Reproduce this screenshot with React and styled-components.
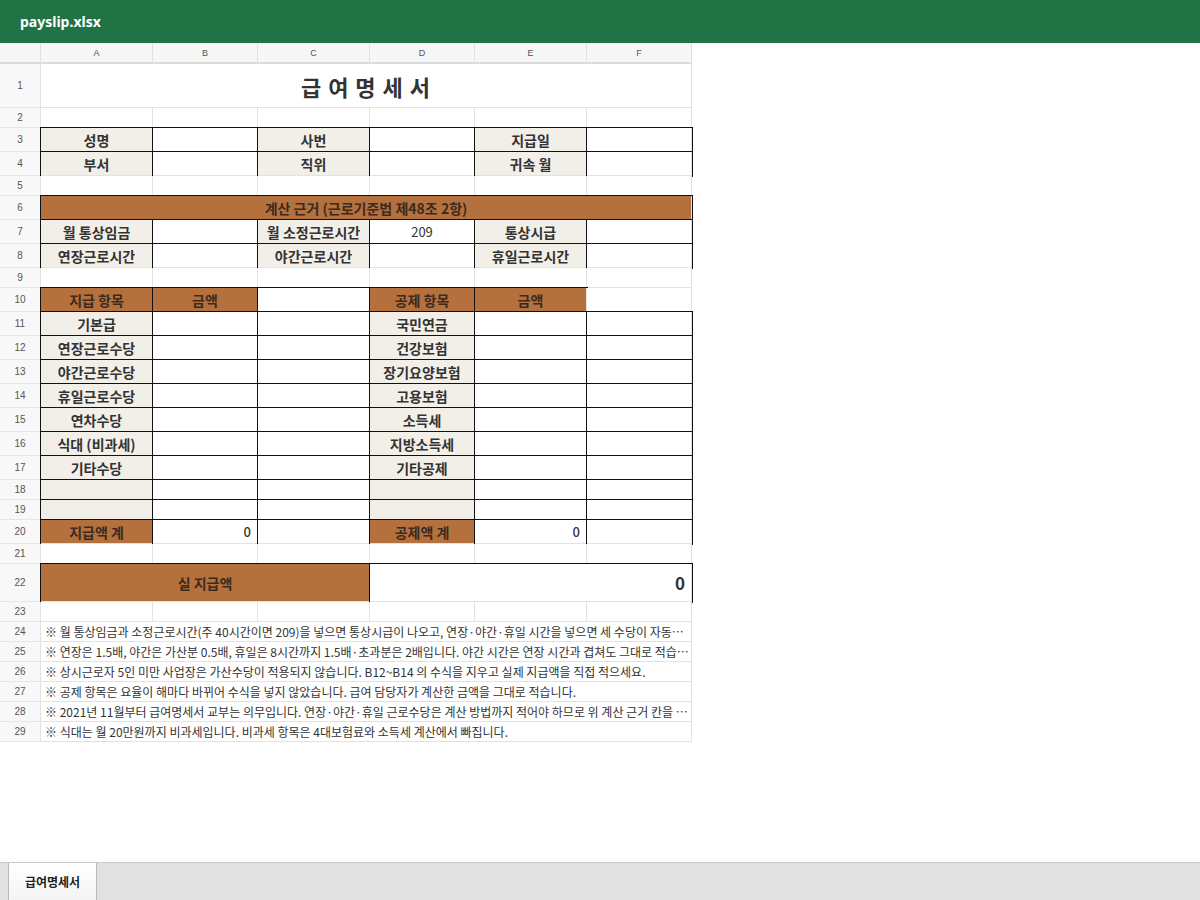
import React from 'react';
import styled, { createGlobalStyle, css } from 'styled-components';

const GlobalStyle = createGlobalStyle`
  html, body {
    margin: 0;
    padding: 0;
    background: #ffffff;
  }
  body {
    font-family: "Noto Sans CJK KR", "Noto Sans", sans-serif;
    color: #333333;
  }
`;

const COLS = '41px 112px 105px 112px 105px 112px 105px';

const Page = styled.div`
  display: flex;
  flex-direction: column;
  height: 100vh;
  overflow: hidden;
`;

const TitleBar = styled.header`
  height: 43px;
  flex: none;
  background: #217346;
  color: #ffffff;
  display: flex;
  align-items: center;
  padding-left: 20px;
  font-family: "Noto Sans", "Open Sans", sans-serif;
  font-weight: 700;
  font-size: 14px;
`;

const SheetArea = styled.main`
  flex: 1;
  overflow: hidden;
  background: #ffffff;
`;

const Sheet = styled.div`
  width: 692px;
  display: flex;
  flex-direction: column;
`;

const SheetRow = styled.div`
  display: grid;
  grid-template-columns: ${COLS};
  height: ${(p) => p.$h}px;
`;

const ColHeader = styled.div`
  display: flex;
  align-items: center;
  justify-content: center;
  box-sizing: border-box;
  background: #f6f6f6;
  border-right: 1px solid #e2e2e2;
  border-bottom: 2px solid #dcdcdc;
  font-family: "Liberation Sans", sans-serif;
  font-size: 9px;
  color: #555555;
`;

const RowHeader = styled.div`
  display: flex;
  align-items: center;
  justify-content: center;
  box-sizing: border-box;
  background: #f8f8f8;
  border-right: 1px solid #e2e2e2;
  border-bottom: 1px solid #e6e6e6;
  font-family: "Liberation Sans", sans-serif;
  font-size: 10px;
  color: #555555;
`;

const fills = {
  white: '#ffffff',
  label: '#f2efe9',
  brown: '#b5713d',
};

const Cell = styled.div`
  grid-column: span ${(p) => p.$span || 1};
  display: flex;
  align-items: center;
  justify-content: ${(p) => (p.$align === 'right' ? 'flex-end' : p.$align === 'left' ? 'flex-start' : 'center')};
  box-sizing: border-box;
  min-width: 0;
  padding: ${(p) => (p.$align === 'right' ? '0 6px 0 4px' : p.$align === 'left' ? '0 2px 0 4px' : '0 4px')};
  background: ${(p) => fills[p.$fill || 'white']};
  border-right: 1px solid #e2e2e2;
  border-bottom: 1px solid #e2e2e2;
  font-size: ${(p) => p.$size || 14}px;
  font-weight: ${(p) => p.$weight || 700};
  color: ${(p) => (p.$fill === 'brown' ? '#3b2a1f' : '#333333')};
  white-space: nowrap;
  ${(p) =>
    p.$boxed &&
    css`
      outline: 1px solid #111111;
    `}
`;

const CellText = styled.span`
  overflow: hidden;
  text-overflow: ellipsis;
  white-space: nowrap;
  letter-spacing: ${(p) => p.$spacing || 0}px;
`;

const TabBar = styled.footer`
  height: 37px;
  flex: none;
  background: #e1e1e1;
  border-top: 1px solid #c8c8c8;
  display: flex;
  padding-left: 8px;
`;

const SheetTab = styled.div`
  width: 87px;
  display: flex;
  align-items: center;
  justify-content: center;
  background: linear-gradient(#ffffff, #f4f4f4);
  border-left: 1px solid #b9b9b9;
  border-right: 1px solid #b9b9b9;
  font-size: 12px;
  font-weight: 700;
  color: #222222;
`;

const L = (text) => ({ text, fill: 'label', boxed: true });
const B = (text) => ({ text, fill: 'brown', boxed: true });
const W = (text = '', extra = {}) => ({ text, boxed: true, ...extra });
const E = () => ({ text: '' });
const blank = () => [E(), E(), E(), E(), E(), E()];
const note = (text) => [{ text, span: 6, align: 'left', weight: 400, size: 12 }];

const rows = [
  { h: 44, cells: [{ text: '급 여 명 세 서', span: 6, size: 22, spacing: 1 }] },
  { h: 20, cells: blank() },
  { h: 24, cells: [L('성명'), W(), L('사번'), W(), L('지급일'), W()] },
  { h: 24, cells: [L('부서'), W(), L('직위'), W(), L('귀속 월'), W()] },
  { h: 20, cells: blank() },
  { h: 24, cells: [{ ...B('계산 근거 (근로기준법 제48조 2항)'), span: 6 }] },
  { h: 24, cells: [L('월 통상임금'), W(), L('월 소정근로시간'), W('209', { weight: 400, size: 13 }), L('통상시급'), W()] },
  { h: 24, cells: [L('연장근로시간'), W(), L('야간근로시간'), W(), L('휴일근로시간'), W()] },
  { h: 20, cells: blank() },
  { h: 24, cells: [B('지급 항목'), B('금액'), W(), B('공제 항목'), B('금액'), E()] },
  { h: 24, cells: [L('기본급'), W(), W(), L('국민연금'), W(), W()] },
  { h: 24, cells: [L('연장근로수당'), W(), W(), L('건강보험'), W(), W()] },
  { h: 24, cells: [L('야간근로수당'), W(), W(), L('장기요양보험'), W(), W()] },
  { h: 24, cells: [L('휴일근로수당'), W(), W(), L('고용보험'), W(), W()] },
  { h: 24, cells: [L('연차수당'), W(), W(), L('소득세'), W(), W()] },
  { h: 24, cells: [L('식대 (비과세)'), W(), W(), L('지방소득세'), W(), W()] },
  { h: 24, cells: [L('기타수당'), W(), W(), L('기타공제'), W(), W()] },
  { h: 20, cells: [L(''), W(), W(), L(''), W(), W()] },
  { h: 20, cells: [L(''), W(), W(), L(''), W(), W()] },
  {
    h: 24,
    cells: [
      B('지급액 계'),
      W('0', { align: 'right', weight: 500, size: 13 }),
      W(),
      B('공제액 계'),
      W('0', { align: 'right', weight: 500, size: 13 }),
      W(),
    ],
  },
  { h: 20, cells: blank() },
  {
    h: 38,
    cells: [
      { ...B('실 지급액'), span: 3 },
      W('0', { span: 3, align: 'right', size: 17 }),
    ],
  },
  { h: 20, cells: blank() },
  { h: 20, cells: note('※ 월 통상임금과 소정근로시간(주 40시간이면 209)을 넣으면 통상시급이 나오고, 연장·야간·휴일 시간을 넣으면 세 수당이 자동으로 계산됩니다.') },
  { h: 20, cells: note('※ 연장은 1.5배, 야간은 가산분 0.5배, 휴일은 8시간까지 1.5배·초과분은 2배입니다. 야간 시간은 연장 시간과 겹쳐도 그대로 적습니다.') },
  { h: 20, cells: note('※ 상시근로자 5인 미만 사업장은 가산수당이 적용되지 않습니다. B12~B14 의 수식을 지우고 실제 지급액을 직접 적으세요.') },
  { h: 20, cells: note('※ 공제 항목은 요율이 해마다 바뀌어 수식을 넣지 않았습니다. 급여 담당자가 계산한 금액을 그대로 적습니다.') },
  { h: 20, cells: note('※ 2021년 11월부터 급여명세서 교부는 의무입니다. 연장·야간·휴일 근로수당은 계산 방법까지 적어야 하므로 위 계산 근거 칸을 지우지 마세요.') },
  { h: 20, cells: note('※ 식대는 월 20만원까지 비과세입니다. 비과세 항목은 4대보험료와 소득세 계산에서 빠집니다.') },
];

const colLetters = ['A', 'B', 'C', 'D', 'E', 'F'];

export default function App() {
  return (
    <Page>
      <GlobalStyle />
      <TitleBar>payslip.xlsx</TitleBar>
      <SheetArea>
        <Sheet>
          <SheetRow $h={21}>
            <ColHeader />
            {colLetters.map((c) => (
              <ColHeader key={c}>{c}</ColHeader>
            ))}
          </SheetRow>
          {rows.map((row, i) => (
            <SheetRow key={i} $h={row.h}>
              <RowHeader>{i + 1}</RowHeader>
              {row.cells.map((cell, j) => (
                <Cell
                  key={j}
                  $span={cell.span}
                  $fill={cell.fill}
                  $boxed={cell.boxed}
                  $align={cell.align}
                  $weight={cell.weight}
                  $size={cell.size}
                >
                  <CellText $spacing={cell.spacing}>{cell.text}</CellText>
                </Cell>
              ))}
            </SheetRow>
          ))}
        </Sheet>
      </SheetArea>
      <TabBar>
        <SheetTab>급여명세서</SheetTab>
      </TabBar>
    </Page>
  );
}
